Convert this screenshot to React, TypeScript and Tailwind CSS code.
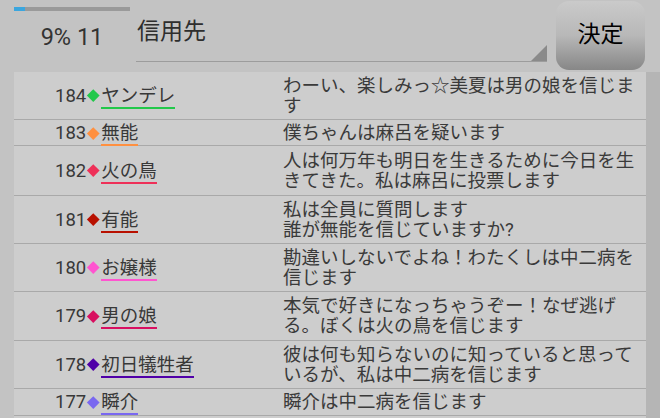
import React from 'react';

const rows = [
    { no: 184, name: 'ヤンデレ', color: '#22c84a', h: 'h-[48px]', msg: 'わーい、楽しみっ☆美夏は男の娘を信じます' },
    { no: 183, name: '無能', color: '#ff9040', h: 'h-[26px]', msg: '僕ちゃんは麻呂を疑います' },
    { no: 182, name: '火の鳥', color: '#ee3058', h: 'h-[50px]', msg: '人は何万年も明日を生きるために今日を生きてきた。私は麻呂に投票します' },
    { no: 181, name: '有能', color: '#b81000', h: 'h-[48px]', msg: '私は全員に質問します\n誰が無能を信じていますか?' },
    { no: 180, name: 'お嬢様', color: '#ff55d0', h: 'h-[48px]', msg: '勘違いしないでよね！わたくしは中二病を信じます' },
    { no: 179, name: '男の娘', color: '#d80f60', h: 'h-[49px]', msg: '本気で好きになっちゃうぞー！なぜ逃げる。ぼくは火の鳥を信じます' },
    { no: 178, name: '初日犠牲者', color: '#5000a8', h: 'h-[48px]', msg: '彼は何も知らないのに知っていると思っているが、私は中二病を信じます' },
    { no: 177, name: '瞬介', color: '#7a68f0', h: 'h-[27px]', msg: '瞬介は中二病を信じます' },
];

const font = { fontFamily: 'Roboto, "Noto Sans CJK JP", sans-serif' };

export default function App() {
    return (
        <div className="w-[660px] h-[418px] overflow-hidden bg-[#c3c3c3] flex flex-col" style={font}>
            {/* Header */}
            <div className="h-[72px] shrink-0 flex">
                <div className="ml-[14px] w-[116px] flex flex-col">
                    <div className="mt-[7px] h-[4px] bg-[#9a9a9a] flex">
                        <div className="w-[11px] bg-[#3ba6de]" />
                    </div>
                    <div className="mt-[12px] text-center text-[23.5px] leading-[28px] text-[#333]">9% 11</div>
                </div>
                <div className="ml-[6px] w-[411px] h-[62px] flex justify-between border-b-[1.5px] border-[#9c9c9c]">
                    <span className="pt-[17px] pl-[1px] text-[23px] leading-[30px] text-[#2e2e2e]">信用先</span>
                    <svg className="self-end" width="16" height="16" viewBox="0 0 16 16">
                        <polygon points="16,0 16,16 0,16" fill="#8a8a8a" />
                    </svg>
                </div>
                <button className="ml-[9px] mt-[1px] w-[89px] h-[69px] rounded-[13px] bg-gradient-to-b from-[#cacaca] via-[#b8b8b8] to-[#878787] flex items-center justify-center text-[23px] text-black">
                    決定
                </button>
            </div>

            {/* List */}
            <div className="flex flex-1 min-h-0">
                <div className="ml-[14px] w-[632px] bg-[#cdcdcd]">
                    {rows.map((r) => (
                        <div key={r.no} className={`${r.h} grid grid-cols-[269px_1fr] border-b-[1.5px] border-[#a9a9a9]`}>
                            <div className="flex items-center pl-[41px] text-[18.5px] leading-[20px] text-[#383838]">
                                <span className="pr-[1px]">{r.no}</span>
                                <span className="w-[13px] flex items-center justify-center">
                                    <span className="w-[8.5px] h-[8.5px] rotate-45" style={{ backgroundColor: r.color }} />
                                </span>
                                <span className="ml-[1px] border-b-2 pb-[1px] mt-[3px]" style={{ borderColor: r.color }}>{r.name}</span>
                            </div>
                            <div className="flex items-center pr-[6px]">
                                <p className="text-[18.5px] leading-[20px] text-[#3a3a3a] whitespace-pre-line">{r.msg}</p>
                            </div>
                        </div>
                    ))}
                </div>
                <div className="flex-1 bg-[#b5b5b5]" />
            </div>
        </div>
    );
}
